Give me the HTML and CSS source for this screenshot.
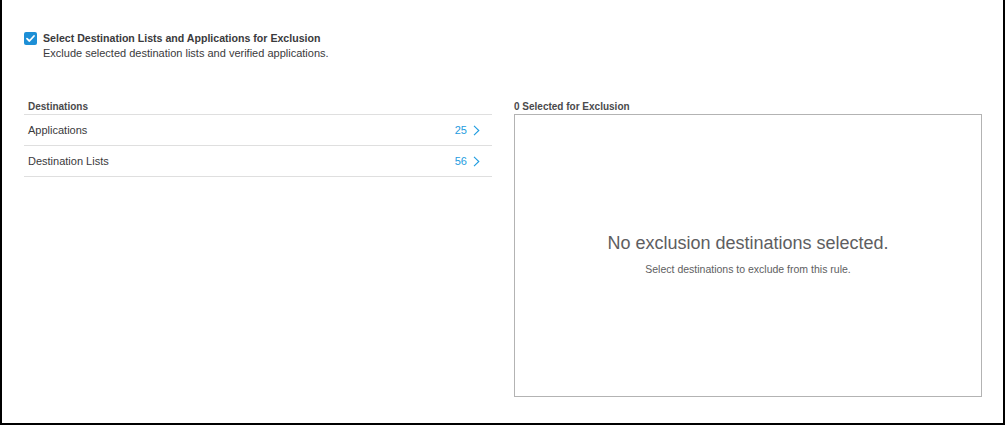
FILE: index.html
```html
<!DOCTYPE html>
<html>
<head>
<meta charset="utf-8">
<link rel="stylesheet" href="styles.css">
</head>
<body>
<div class="page">
  <div class="option">
    <span class="checkbox">
      <svg width="13" height="13" viewBox="0 0 13 13"><rect width="13" height="13" rx="2" fill="#1d8fd6"/><path d="M3 6.7 L5.4 9 L10 4" stroke="#fff" stroke-width="1.8" fill="none" stroke-linecap="round" stroke-linejoin="round"/></svg>
    </span>
    <div class="option-text">
      <div class="option-title">Select Destination Lists and Applications for Exclusion</div>
      <div class="option-sub">Exclude selected destination lists and verified applications.</div>
    </div>
  </div>
  <div class="columns">
    <div class="col">
      <div class="col-head">Destinations</div>
      <div class="list">
        <div class="row"><span>Applications</span><span class="count">25<svg width="7" height="11" viewBox="0 0 7 11"><path d="M1 0.8 L5.8 5.5 L1 10.2" stroke="#1e9ce0" stroke-width="1.1" fill="none"/></svg></span></div>
        <div class="row"><span>Destination Lists</span><span class="count">56<svg width="7" height="11" viewBox="0 0 7 11"><path d="M1 0.8 L5.8 5.5 L1 10.2" stroke="#1e9ce0" stroke-width="1.1" fill="none"/></svg></span></div>
      </div>
    </div>
    <div class="col">
      <div class="col-head">0 Selected for Exclusion</div>
      <div class="box">
        <div class="empty-title">No exclusion destinations selected.</div>
        <div class="empty-sub">Select destinations to exclude from this rule.</div>
      </div>
    </div>
  </div>
</div>
</body>
</html>
```
FILE: styles.css
```css
html, body { margin: 0; padding: 0; }
body {
  width: 1005px;
  height: 425px;
  box-sizing: border-box;
  border: 2px solid #000;
  border-top: none;
  background: #fff;
  font-family: "Liberation Sans", Arial, sans-serif;
  color: #39393b;
  overflow: hidden;
}
.page {
  padding: 32px 21px 0 22px;
}
.option {
  display: flex;
  gap: 6px;
  align-items: flex-start;
}
.checkbox { display: block; height: 13px; width: 13px; margin-top: 0; }
.checkbox svg { display: block; }
.option-title { font-size: 10.6px; font-weight: bold; color: #3a3a3c; line-height: 13px; }
.option-sub { font-size: 11px; color: #3a3a3c; line-height: 14px; margin-top: 1px; }
.columns {
  display: grid;
  grid-template-columns: 468px 468px;
  column-gap: 22px;
  margin-top: 40px;
}
.col-head {
  font-size: 10px;
  font-weight: bold;
  color: #4a4a4c;
  height: 14px;
  line-height: 14px;
  padding-left: 4px;
}
.col:last-child .col-head { padding-left: 0; }
.list { border-top: 1px solid #dfdfdf; }
.row {
  height: 30px;
  border-bottom: 1px solid #dfdfdf;
  display: flex;
  align-items: center;
  justify-content: space-between;
  padding: 0 12px 0 4px;
  font-size: 11px;
  color: #3a3a3c;
}
.count { color: #1e9ce0; display: flex; align-items: center; gap: 6px; }
.count svg { display: block; }
.box {
  height: 281px;
  border: 1px solid #b3b3b3;
  display: flex;
  flex-direction: column;
  align-items: center;
  justify-content: center;
}
.empty-title { font-size: 18px; color: #5e5e61; margin-top: -4px; }
.empty-sub { font-size: 10.5px; color: #5e5e61; margin-top: 9px; }
```
